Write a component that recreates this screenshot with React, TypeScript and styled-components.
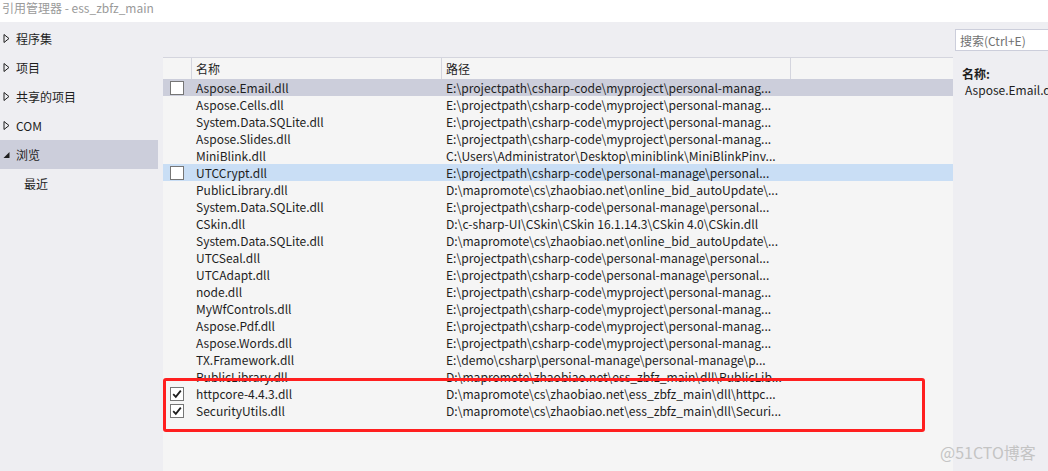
import React from "react";
import styled, { createGlobalStyle } from "styled-components";

const Global = createGlobalStyle`
  html, body { margin: 0; padding: 0; }
  body {
    width: 1048px; height: 471px; overflow: hidden;
    background: #eeeef2;
    font-family: "Noto Sans CJK SC", "Noto Sans", sans-serif;
    font-size: 12px; color: #1e1e1e;
  }
`;

const Window = styled.div`
  width: 1048px; height: 471px; display: flex; flex-direction: column;
  position: relative; overflow: hidden;
`;

const TitleBar = styled.div`
  height: 22px; background: #ffffff; color: #9a9a9a;
  font-size: 12px; line-height: 16px; padding-left: 2px; box-sizing: border-box;
`;

const Body = styled.div`
  flex: 1; display: grid; grid-template-columns: 158px 795px 1fr;
  min-height: 0;
`;

const Nav = styled.div`
  display: flex; flex-direction: column; padding-top: 2px;
`;

const NavItem = styled.div<{ $selected?: boolean; $indent?: boolean }>`
  height: 29px; display: flex; align-items: center;
  padding-left: ${(p) => (p.$indent ? "24px" : "3px")};
  background: ${(p) => (p.$selected ? "#cccedb" : "transparent")};
  gap: 6px; font-size: 12px;
`;

const Tri = styled.svg`
  width: 7px; height: 9px; flex: none;
`;

const Middle = styled.div`
  padding-top: 35px; margin-left: 5px; min-height: 0; display: flex;
`;

const List = styled.div`
  flex: 1; background: #f5f5f5; position: relative; border-top: 1px solid #d4d5de;
`;

const HeaderRow = styled.div`
  display: grid; grid-template-columns: 28px 250px 349px 1fr; height: 21px;
`;

const HeadCell = styled.div<{ $first?: boolean }>`
  border-left: ${(p) => (p.$first ? "none" : "1px solid #d4d5de")};
  padding-left: 4px; display: flex; align-items: center; font-size: 12px;
`;

const Row = styled.div<{ $bg?: string }>`
  display: grid; grid-template-columns: 28px 255px 1fr; height: 17px; align-items: center;
  background: ${(p) => p.$bg || "transparent"}; white-space: nowrap;
`;

const CheckCell = styled.div`
  display: flex; align-items: center; padding-left: 7px;
`;

const Box = styled.div`
  width: 12px; height: 12px; border: 1px solid #767676; background: #ffffff;
  display: flex; align-items: center; justify-content: center;
`;

const NameCell = styled.div`
  overflow: hidden; padding-left: 5px; line-height: 17px;
`;

const PathCell = styled.div`
  overflow: hidden; line-height: 17px; font-size: 12.1px;
`;

const Side = styled.div`
  display: flex; flex-direction: column; padding-top: 7px; padding-left: 2px;
  overflow: hidden;
`;

const Search = styled.div`
  height: 22px; box-sizing: border-box; border: 1px solid #cccedb; border-right: none;
  background: #ffffff; color: #717171; display: flex; align-items: center;
  padding-left: 4px; font-size: 12px; white-space: nowrap;
`;

const PropLabel = styled.div`
  font-weight: bold; margin-top: 15px; padding-left: 7px; line-height: 16px;
`;

const PropValue = styled.div`
  padding-left: 10px; white-space: nowrap; line-height: 16px;
`;

const RedBox = styled.div`
  position: absolute; left: 0px; top: 320px; width: 762px; height: 54px;
  box-sizing: border-box; border: 3px solid #ff1f1f; border-radius: 3px;
`;

const Watermark = styled.div`
  position: absolute; left: 940px; top: 440px; color: #c4c4c4;
  font-size: 16px; font-family: "Noto Sans CJK SC", sans-serif; white-space: nowrap;
`;

type R = { name: string; path: string; check?: "off" | "on"; bg?: string };

const rows: R[] = [
  { name: "Aspose.Email.dll", path: "E:\\projectpath\\csharp-code\\myproject\\personal-manag...", check: "off", bg: "#cccedb" },
  { name: "Aspose.Cells.dll", path: "E:\\projectpath\\csharp-code\\myproject\\personal-manag..." },
  { name: "System.Data.SQLite.dll", path: "E:\\projectpath\\csharp-code\\myproject\\personal-manag..." },
  { name: "Aspose.Slides.dll", path: "E:\\projectpath\\csharp-code\\myproject\\personal-manag..." },
  { name: "MiniBlink.dll", path: "C:\\Users\\Administrator\\Desktop\\miniblink\\MiniBlinkPinv..." },
  { name: "UTCCrypt.dll", path: "E:\\projectpath\\csharp-code\\personal-manage\\personal...", check: "off", bg: "#c9def5" },
  { name: "PublicLibrary.dll", path: "D:\\mapromote\\cs\\zhaobiao.net\\online_bid_autoUpdate\\..." },
  { name: "System.Data.SQLite.dll", path: "E:\\projectpath\\csharp-code\\personal-manage\\personal..." },
  { name: "CSkin.dll", path: "D:\\c-sharp-UI\\CSkin\\CSkin 16.1.14.3\\CSkin 4.0\\CSkin.dll" },
  { name: "System.Data.SQLite.dll", path: "D:\\mapromote\\cs\\zhaobiao.net\\online_bid_autoUpdate\\..." },
  { name: "UTCSeal.dll", path: "E:\\projectpath\\csharp-code\\personal-manage\\personal..." },
  { name: "UTCAdapt.dll", path: "E:\\projectpath\\csharp-code\\personal-manage\\personal..." },
  { name: "node.dll", path: "E:\\projectpath\\csharp-code\\myproject\\personal-manag..." },
  { name: "MyWfControls.dll", path: "E:\\projectpath\\csharp-code\\myproject\\personal-manag..." },
  { name: "Aspose.Pdf.dll", path: "E:\\projectpath\\csharp-code\\myproject\\personal-manag..." },
  { name: "Aspose.Words.dll", path: "E:\\projectpath\\csharp-code\\myproject\\personal-manag..." },
  { name: "TX.Framework.dll", path: "E:\\demo\\csharp\\personal-manage\\personal-manage\\p..." },
  { name: "PublicLibrary.dll", path: "D:\\mapromote\\zhaobiao.net\\ess_zbfz_main\\dll\\PublicLib..." },
  { name: "httpcore-4.4.3.dll", path: "D:\\mapromote\\cs\\zhaobiao.net\\ess_zbfz_main\\dll\\httpc...", check: "on" },
  { name: "SecurityUtils.dll", path: "D:\\mapromote\\cs\\zhaobiao.net\\ess_zbfz_main\\dll\\Securi...", check: "on" },
];

const Collapsed = () => (
  <Tri viewBox="0 0 7 9">
    <path d="M1 0.5 L6 4.5 L1 8.5 Z" fill="none" stroke="#1e1e1e" strokeWidth="1" />
  </Tri>
);
const Expanded = () => (
  <Tri viewBox="0 0 7 9">
    <path d="M0.5 8 L6.5 8 L6.5 2 Z" fill="#1e1e1e" />
  </Tri>
);

const Check = () => (
  <svg width="10" height="10" viewBox="0 0 10 10">
    <path d="M1.2 5.2 L3.8 7.8 L8.8 1.6" fill="none" stroke="#1e1e1e" strokeWidth="1.8" />
  </svg>
);

export default function App() {
  return (
    <Window>
      <Global />
      <TitleBar>引用管理器 - ess_zbfz_main</TitleBar>
      <Body>
        <Nav>
          <NavItem><Collapsed />程序集</NavItem>
          <NavItem><Collapsed />项目</NavItem>
          <NavItem><Collapsed />共享的项目</NavItem>
          <NavItem><Collapsed />COM</NavItem>
          <NavItem $selected><Expanded />浏览</NavItem>
          <NavItem $indent>最近</NavItem>
        </Nav>
        <Middle>
          <List>
            <HeaderRow>
              <HeadCell $first />
              <HeadCell>名称</HeadCell>
              <HeadCell>路径</HeadCell>
              <HeadCell />
            </HeaderRow>
            {rows.map((r, i) => (
              <Row key={i} $bg={r.bg}>
                <CheckCell>
                  {r.check && <Box>{r.check === "on" && <Check />}</Box>}
                </CheckCell>
                <NameCell>{r.name}</NameCell>
                <PathCell>{r.path}</PathCell>
              </Row>
            ))}
            <RedBox />
          </List>
        </Middle>
        <Side>
          <Search>搜索(Ctrl+E)</Search>
          <PropLabel>名称:</PropLabel>
          <PropValue>Aspose.Email.dll</PropValue>
        </Side>
      </Body>
      <Watermark>@51CTO博客</Watermark>
    </Window>
  );
}
